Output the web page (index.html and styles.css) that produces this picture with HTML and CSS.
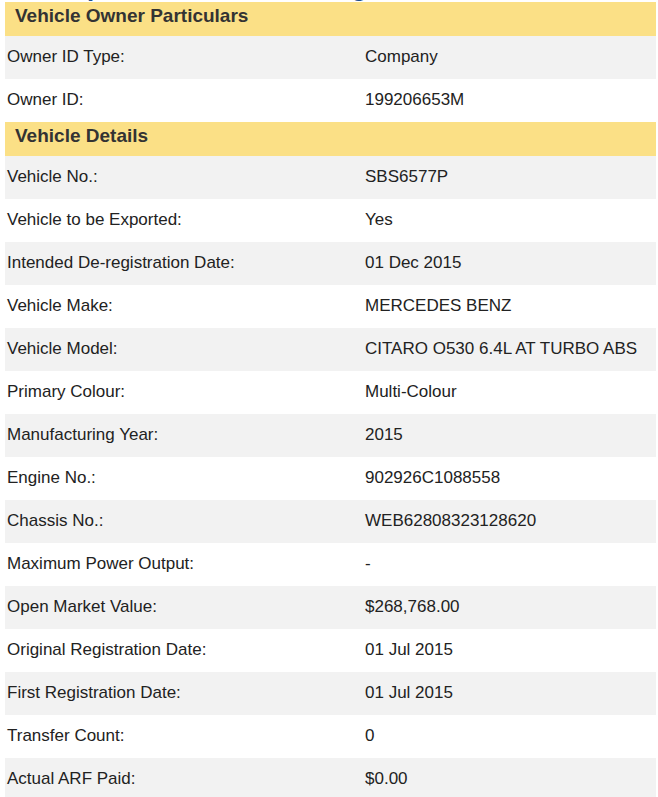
FILE: index.html
```html
<!DOCTYPE html>
<html>
<head>
<meta charset="utf-8">
<link rel="stylesheet" href="styles.css">
</head>
<body>
<div class="page">
  <h1 class="title">Request for Vehicle Deregistration</h1>
  <section class="panel">
    <h2 class="section-head">Vehicle Owner Particulars</h2>
    <div class="row"><div class="label">Owner ID Type:</div><div class="value">Company</div></div>
    <div class="row"><div class="label">Owner ID:</div><div class="value">199206653M</div></div>
    <h2 class="section-head">Vehicle Details</h2>
    <div class="row"><div class="label">Vehicle No.:</div><div class="value">SBS6577P</div></div>
    <div class="row"><div class="label">Vehicle to be Exported:</div><div class="value">Yes</div></div>
    <div class="row"><div class="label">Intended De-registration Date:</div><div class="value">01 Dec 2015</div></div>
    <div class="row"><div class="label">Vehicle Make:</div><div class="value">MERCEDES BENZ</div></div>
    <div class="row"><div class="label">Vehicle Model:</div><div class="value">CITARO O530 6.4L AT TURBO ABS</div></div>
    <div class="row"><div class="label">Primary Colour:</div><div class="value">Multi-Colour</div></div>
    <div class="row"><div class="label">Manufacturing Year:</div><div class="value">2015</div></div>
    <div class="row"><div class="label">Engine No.:</div><div class="value">902926C1088558</div></div>
    <div class="row"><div class="label">Chassis No.:</div><div class="value">WEB62808323128620</div></div>
    <div class="row"><div class="label">Maximum Power Output:</div><div class="value">-</div></div>
    <div class="row"><div class="label">Open Market Value:</div><div class="value">$268,768.00</div></div>
    <div class="row"><div class="label">Original Registration Date:</div><div class="value">01 Jul 2015</div></div>
    <div class="row"><div class="label">First Registration Date:</div><div class="value">01 Jul 2015</div></div>
    <div class="row"><div class="label">Transfer Count:</div><div class="value">0</div></div>
    <div class="row"><div class="label">Actual ARF Paid:</div><div class="value">$0.00</div></div>
  </section>
</div>
</body>
</html>
```

FILE: styles.css
```css
html, body {
  margin: 0;
  padding: 0;
  background: #ffffff;
}
body {
  font-family: "Liberation Sans", Arial, Helvetica, sans-serif;
  color: #333333;
  overflow: hidden;
}
.page {
  margin-left: 5px;
  width: 651px;
}
.title {
  margin: -28px 0 0 40px;
  height: 30px;
  font-size: 26px;
  line-height: 30px;
  font-weight: bold;
  color: #1f4f8f;
  white-space: nowrap;
  overflow: hidden;
}
.panel {
  display: flex;
  flex-direction: column;
}
.section-head {
  box-sizing: border-box;
  margin: 0;
  height: 34px;
  display: flex;
  align-items: center;
  padding: 0 0 7px 10px;
  background: #fbe086;
  font-size: 19px;
  font-weight: bold;
  color: #333333;
}
.row {
  display: grid;
  grid-template-columns: 358px 1fr;
  height: 43px;
  align-items: center;
  padding-left: 2px;
  padding-bottom: 2px;
  box-sizing: border-box;
  font-size: 17px;
  color: #222222;
}
.section-head + .row,
.section-head + .row + .row + .row,
.section-head + .row + .row + .row + .row + .row,
.section-head + .row + .row + .row + .row + .row + .row + .row,
.section-head + .row + .row + .row + .row + .row + .row + .row + .row + .row,
.section-head + .row + .row + .row + .row + .row + .row + .row + .row + .row + .row + .row,
.section-head + .row + .row + .row + .row + .row + .row + .row + .row + .row + .row + .row + .row + .row,
.section-head + .row + .row + .row + .row + .row + .row + .row + .row + .row + .row + .row + .row + .row + .row + .row {
  background: #f2f2f2;
}
```
